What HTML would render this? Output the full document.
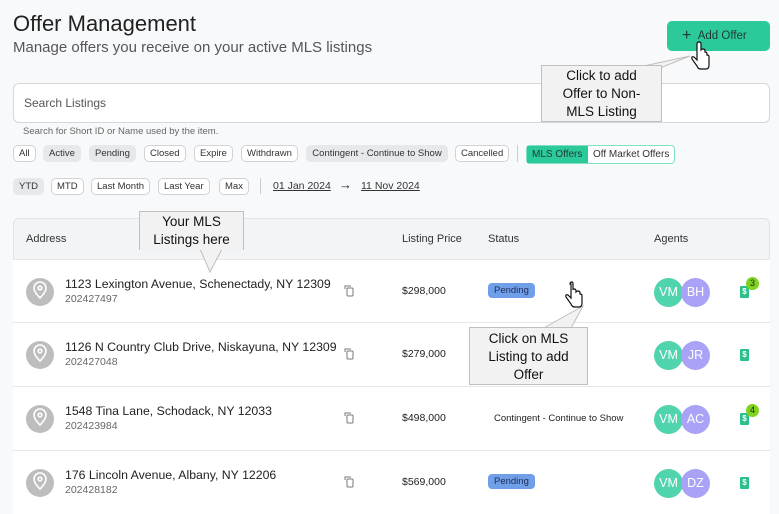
<!DOCTYPE html>
<html><head><meta charset="utf-8"><style>
*{margin:0;padding:0;box-sizing:border-box}
html,body{width:779px;height:514px;overflow:hidden}
body{background:#f8f9fb;font-family:"Liberation Sans",sans-serif;color:#222;position:relative}
.a{position:absolute}
.chip{position:absolute;height:17px;border:1px solid #cfd2d6;border-radius:5px;font-size:9.5px;line-height:15px;padding:0 5px;color:#333;background:#fff}
.chip.g{background:#e7e8ea;border-color:#e7e8ea}
.row{position:absolute;left:13px;width:757px;height:64px;background:#fff;border-top:1px solid #e6e7e9}
.pin{position:absolute;left:13px;top:18px;width:28px;height:28px;border-radius:50%;background:#bdbdbd}
.addr{position:absolute;left:52px;top:17px;font-size:12.3px;color:#222}
.id{position:absolute;left:52px;top:33px;font-size:10.5px;color:#666}
.price{position:absolute;left:389px;top:25px;font-size:10.5px;color:#222}
.pend{position:absolute;left:475px;top:23px;background:#6f9fe8;color:#1d2e55;font-size:9.5px;border-radius:4px;padding:2px 6px}
.av{position:absolute;top:18px;width:29px;height:29px;border-radius:50%;color:#fff;font-size:12.5px;text-align:center;line-height:29px}
.vm{left:641px;background:#4fd4ae}
.o{left:668px;background:#a9a2f7}
.doc{position:absolute;left:727px;top:26px;width:9px;height:12px;background:#2bbf8a;border-radius:1px;color:#fff;font-size:8px;line-height:12px;text-align:center;font-weight:bold}
.bad{position:absolute;left:733px;top:17px;width:13px;height:13px;border-radius:50%;background:#7ed321;font-size:9px;text-align:center;line-height:13px;color:#222}
.call{position:absolute;background:#f2f2f2;border:1px solid #bfbfbf;font-size:13.5px;text-align:center;line-height:18px;color:#111;font-family:"Liberation Sans",sans-serif}
</style></head><body>
<div class="a" style="left:13px;top:11px;font-size:22px;color:#222">Offer Management</div>
<div class="a" style="left:13px;top:39px;font-size:15px;color:#555">Manage offers you receive on your active MLS listings</div>
<div class="a" style="left:667px;top:21px;width:103px;height:30px;background:#2cc99a;border-radius:5px;font-size:11.5px;color:#1f3b33;line-height:30px;padding-left:15px"><span style="font-size:16px;vertical-align:-1px">+</span>&nbsp;&nbsp;Add Offer</div>
<div class="a" style="left:13px;top:83px;width:757px;height:40px;background:#fff;border:1px solid #d5d7da;border-radius:6px;font-size:12px;color:#555;line-height:38px;padding-left:10px">Search Listings</div>
<div class="a" style="left:23px;top:126px;font-size:9.5px;color:#666">Search for Short ID or Name used by the item.</div>
<div class="chip" style="left:13px;top:145px">All</div>
<div class="chip g" style="left:43px;top:145px">Active</div>
<div class="chip g" style="left:89px;top:145px">Pending</div>
<div class="chip" style="left:144px;top:145px">Closed</div>
<div class="chip" style="left:194px;top:145px">Expire</div>
<div class="chip" style="left:241px;top:145px">Withdrawn</div>
<div class="chip g" style="left:306px;top:145px;width:142px;text-align:center">Contingent - Continue to Show</div>
<div class="chip" style="left:455px;top:145px">Cancelled</div>
<div class="a" style="left:517px;top:145px;width:1px;height:17px;background:#ccc"></div>
<div class="a" style="left:526px;top:145px;width:149px;height:19px;border:1px solid #7fe0c2;border-radius:4px;background:#fff;font-size:10px;line-height:17px">
<span style="position:absolute;left:0;top:0;width:61px;height:17px;background:#2cc99a;color:#1f3b33;padding-left:5px">MLS Offers</span>
<span style="position:absolute;left:66px;top:0;color:#333">Off Market Offers</span></div>
<div class="chip g" style="left:13px;top:178px">YTD</div>
<div class="chip" style="left:51px;top:178px">MTD</div>
<div class="chip" style="left:91px;top:178px">Last Month</div>
<div class="chip" style="left:158px;top:178px">Last Year</div>
<div class="chip" style="left:219px;top:178px">Max</div>
<div class="a" style="left:260px;top:178px;width:1px;height:16px;background:#ccc"></div>
<div class="a" style="left:273px;top:180px;font-size:10.5px;text-decoration:underline;color:#333">01 Jan 2024</div>
<div class="a" style="left:339px;top:177px;font-size:13px">→</div>
<div class="a" style="left:361px;top:180px;font-size:10.5px;text-decoration:underline;color:#333">11 Nov 2024</div>

<div class="a" style="left:13px;top:218px;width:757px;height:296px;border:1px solid #e2e3e5;border-bottom:none;border-radius:6px 6px 0 0;background:#f3f4f6"></div>
<div class="a" style="left:26px;top:233px;font-size:11px;color:#333">Address</div>
<div class="a" style="left:402px;top:233px;font-size:11px;color:#333">Listing Price</div>
<div class="a" style="left:488px;top:233px;font-size:11px;color:#333">Status</div>
<div class="a" style="left:654px;top:233px;font-size:11px;color:#333">Agents</div>

<div class="row" style="top:259px"><div class="pin"></div><div class="addr">1123 Lexington Avenue, Schenectady, NY 12309</div><div class="id">202427497</div><div class="price">$298,000</div><div class="pend">Pending</div><div class="av vm">VM</div><div class="av o">BH</div><div class="doc">$</div><div class="bad">3</div></div>
<div class="row" style="top:322px"><div class="pin"></div><div class="addr">1126 N Country Club Drive, Niskayuna, NY 12309</div><div class="id">202427048</div><div class="price">$279,000</div><div class="av vm">VM</div><div class="av o">JR</div><div class="doc">$</div></div>
<div class="row" style="top:386px"><div class="pin"></div><div class="addr">1548 Tina Lane, Schodack, NY 12033</div><div class="id">202423984</div><div class="price">$498,000</div><div style="position:absolute;left:481px;top:26px;font-size:9.5px">Contingent - Continue to Show</div><div class="av vm">VM</div><div class="av o">AC</div><div class="doc">$</div><div class="bad">4</div></div>
<div class="row" style="top:450px;height:64px"><div class="pin"></div><div class="addr">176 Lincoln Avenue, Albany, NY 12206</div><div class="id">202428182</div><div class="price">$569,000</div><div class="pend">Pending</div><div class="av vm">VM</div><div class="av o">DZ</div><div class="doc">$</div></div>

<svg class="a" style="left:0;top:0" width="779" height="514">
<polygon points="625,70 690,56 655,70" fill="#f2f2f2" stroke="#bfbfbf"/>
<polygon points="200,249 210,272 222,249" fill="#f2f2f2" stroke="#bfbfbf"/>
<polygon points="540,330 583,306 570,330" fill="#f2f2f2" stroke="#bfbfbf"/>
<g fill="#fff" stroke="#111" stroke-width="1.2">
<path d="M697,44 v16 l-3,-3 q-3,-1 -2,2 l5,7 q1,3 4,3 h5 q3,0 3,-4 v-8 q0,-2 -2,-2 v-1 q0,-2 -2,-2 v-1 q0,-2 -2,-2 q-1,0 -2,1 v-6 q0,-2 -2,-2 q-2,0 -2,2z"/>
<path d="M571,284 v14 l-3,-3 q-3,-1 -2,2 l5,7 q1,3 4,3 h4 q3,0 3,-4 v-7 q0,-2 -2,-2 v-1 q0,-2 -2,-2 q-1,0 -2,1 v-1 q0,-2 -2,-2 q-1,0 -1,1 v-6 q0,-2 -1,-2 q-2,0 -2,2z"/>
</g>
<g fill="none" stroke="#fff" stroke-width="1.6">
<path d="M40,298 q-6,-6 -6,-10 a6,6 0 0 1 12,0 q0,4 -6,10z"/><circle cx="40" cy="288" r="1.8"/>
<path d="M40,361 q-6,-6 -6,-10 a6,6 0 0 1 12,0 q0,4 -6,10z"/><circle cx="40" cy="351" r="1.8"/>
<path d="M40,425 q-6,-6 -6,-10 a6,6 0 0 1 12,0 q0,4 -6,10z"/><circle cx="40" cy="415" r="1.8"/>
<path d="M40,489 q-6,-6 -6,-10 a6,6 0 0 1 12,0 q0,4 -6,10z"/><circle cx="40" cy="479" r="1.8"/>
</g>
<g fill="none" stroke="#777" stroke-width="1">
<path d="M345,289 v-3 h6"/><rect x="347" y="288" width="6" height="8" rx="1"/>
<path d="M345,352 v-3 h6"/><rect x="347" y="351" width="6" height="8" rx="1"/>
<path d="M345,416 v-3 h6"/><rect x="347" y="415" width="6" height="8" rx="1"/>
<path d="M345,480 v-3 h6"/><rect x="347" y="479" width="6" height="8" rx="1"/>
</g>
</svg>
<div class="call" style="left:541px;top:65px;width:121px;height:57px;padding-top:1px">Click to add<br>Offer to Non-<br>MLS Listing</div>
<div class="call" style="left:139px;top:211px;width:105px;height:39px;padding-top:1px;border-bottom:none">Your MLS<br>Listings here</div>
<div class="call" style="left:469px;top:327px;width:119px;height:58px;padding-top:2px">Click on MLS<br>Listing to add<br>Offer</div>
</body></html>
